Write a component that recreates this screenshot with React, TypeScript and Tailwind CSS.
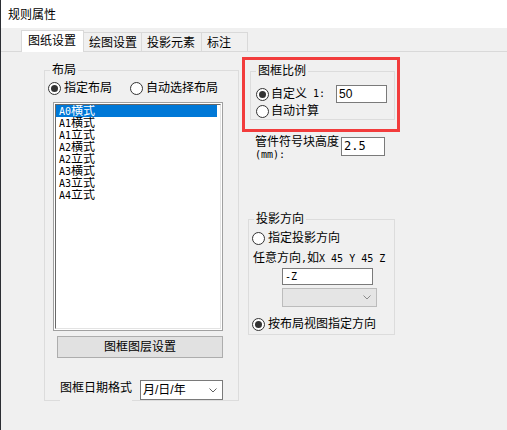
import React from 'react'

// ── Bits ──────────────────────────────────────────────────────────────────────

const mono = "font-['DejaVu_Sans_Mono',monospace] text-[10px]"

function Radio({ checked }: { checked?: boolean }) {
  return (
    <span className="w-[13px] h-[13px] rounded-full border border-[#333] bg-white flex items-center justify-center flex-shrink-0">
      {checked && <span className="w-[7px] h-[7px] rounded-full bg-[#333]" />}
    </span>
  )
}

function Chevron({ color = '#606060' }: { color?: string }) {
  return (
    <svg width="8" height="5" viewBox="0 0 8 5" className="flex-shrink-0">
      <path d="M0.5 0.5 L4 4 L7.5 0.5" fill="none" stroke={color} strokeWidth="1" />
    </svg>
  )
}

function Legend({ children }: { children: React.ReactNode }) {
  return (
    <span className="-mt-[9px] ml-[5px] px-[2px] h-[16px] leading-[16px] bg-[#f0f0f0] self-start">
      {children}
    </span>
  )
}

const LAYOUTS: [string, string][] = [
  ['A0', '横式'],
  ['A1', '横式'],
  ['A1', '立式'],
  ['A2', '横式'],
  ['A2', '立式'],
  ['A3', '横式'],
  ['A3', '立式'],
  ['A4', '立式'],
]

const TABS = [
  { label: '图纸设置', w: 'w-[58px]' },
  { label: '绘图设置', w: 'w-[58px]' },
  { label: '投影元素', w: 'w-[60px]' },
  { label: '标注', w: 'w-[46px]' },
]

// ── App ───────────────────────────────────────────────────────────────────────

export default function App() {
  return (
    <div className="w-[507px] h-[430px] overflow-hidden bg-[#f0f0f0] border-l border-[#2b2e33] flex flex-col text-[12px] leading-[16px] text-black font-['Liberation_Sans','Noto_Sans_CJK_SC',sans-serif]">

      {/* Title bar */}
      <div className="h-[28px] bg-white flex items-center pl-[7px] pt-[2px] flex-shrink-0">规则属性</div>

      {/* Tabs */}
      <div className="h-[24px] flex items-end pl-[20px] border-b border-[#d9d9d9] flex-shrink-0">
        <div className="w-[63px] h-[22px] -mb-px bg-white border border-b-0 border-[#d9d9d9] pl-[6px] flex items-center pb-[1px] relative">
          {TABS[0].label}
        </div>
        {TABS.slice(1).map(t => (
          <div key={t.label} className={`${t.w} h-[19px] border-t border-r border-[#d9d9d9] pl-[5px] pt-[3px] leading-[14px]`}>
            {t.label}
          </div>
        ))}
      </div>

      {/* Body */}
      <div className="flex-1 flex items-start pl-[43px]">

        {/* 布局 */}
        <div className="mt-[18px] w-[195px] border border-[#dcdcdc] flex flex-col">
          <Legend>布局</Legend>
          <div className="mt-[2px] h-[16px] flex items-center pl-[3px]">
            <Radio checked />
            <span className="ml-[3px]">指定布局</span>
            <span className="ml-[18px]"><Radio /></span>
            <span className="ml-[3px]">自动选择布局</span>
          </div>

          <div className="mt-[6px] ml-[8px] w-[170px] h-[229px] border border-[#a0a0a0] p-px bg-white flex">
            <div className="flex-1 border border-[#696969] border-r-[#e3e3e3] border-b-[#e3e3e3] pr-[3px]">
              {LAYOUTS.map(([a, b], i) => (
                <div key={i} className={`h-[12px] leading-[12px] pl-[3px] whitespace-nowrap overflow-hidden ${i === 0 ? 'bg-[#0078d7] text-white' : ''}`}>
                  <span className={mono}>{a}</span>{b}
                </div>
              ))}
            </div>
          </div>

          <button className="mt-[5px] ml-[12px] w-[166px] h-[22px] bg-[#e1e1e1] border border-[#adadad] flex items-center justify-center">
            图框图层设置
          </button>

          <div className="mt-[22px] -mb-px h-[21px] flex items-start">
            <span className="ml-[15px] w-[72px] h-[21px] bg-[#f0f0f0] leading-[16px]">图框日期格式</span>
            <div className="ml-[8px] w-[83px] h-[20px] bg-white border border-[#7a7a7a] flex items-center pl-[2px] pr-[5px]">
              <span className="flex-1">月/日/年</span>
              <Chevron />
            </div>
          </div>
        </div>

        {/* Right column */}
        <div className="ml-[3px] w-[158px] flex flex-col">

          {/* 图框比例 (highlighted) */}
          <div className="mt-[5px] h-[75px] border-[3px] border-[#f23c3c] flex flex-col">
            <div className="mt-[11px] ml-[5px] w-[145px] border border-[#dcdcdc] flex flex-col">
              <Legend>图框比例</Legend>
              <div className="mt-[6px] h-[18px] flex items-center pl-[5px]">
                <Radio checked />
                <span className="ml-[2px]">自定义</span>
                <span className={`${mono} ml-[6px]`}>1:</span>
                <div className="ml-[11px] w-[51px] h-[18px] bg-white border border-[#7a7a7a] pl-[2px] leading-[16px]">50</div>
              </div>
              <div className="h-[16px] flex items-center pl-[5px]">
                <Radio />
                <span className="ml-[2px]">自动计算</span>
              </div>
            </div>
          </div>

          {/* 管件符号块高度 */}
          <div className="mt-[4px] ml-[13px] flex items-start">
            <div className="w-[84px] leading-[12px]">
              管件符号块高度<br />
              <span className={mono}>(mm):</span>
            </div>
            <div className={`mt-[1px] ml-[2px] w-[44px] h-[19px] bg-white border border-[#7a7a7a] pl-[2px] leading-[17px] ${mono} text-[12px]`}>2.5</div>
          </div>

          {/* 投影方向 */}
          <div className="mt-[58px] ml-[6px] w-[147px] border border-[#dcdcdc] flex flex-col pb-[2px]">
            <Legend>投影方向</Legend>
            <div className="mt-[3px] h-[16px] flex items-center pl-[3px]">
              <Radio />
              <span className="ml-[3px]">指定投影方向</span>
            </div>
            <div className="mt-[4px] h-[16px] pl-[4px] whitespace-nowrap">
              任意方向<span className={mono}>,</span>如<span className={mono}>X 45 Y 45 Z</span>
            </div>
            <div className={`mt-[2px] ml-[33px] w-[91px] h-[17px] bg-white border border-[#7a7a7a] pl-[2px] leading-[15px] ${mono}`}>-Z</div>
            <div className="mt-[3px] ml-[33px] w-[95px] h-[19px] bg-[#e5e5e5] border border-[#bcbcbc] flex items-center justify-end pr-[5px]">
              <Chevron color="#8a8a8a" />
            </div>
            <div className="mt-[9px] h-[16px] flex items-center pl-[3px]">
              <Radio checked />
              <span className="ml-[3px]">按布局视图指定方向</span>
            </div>
          </div>
        </div>
      </div>
    </div>
  )
}
